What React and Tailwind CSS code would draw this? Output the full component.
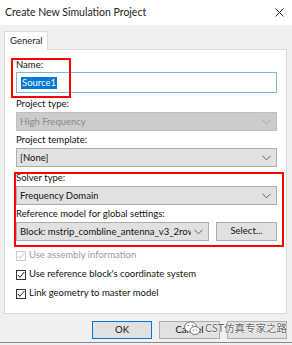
import React from "react";

const font = { fontFamily: 'Lato, "Noto Sans", "Noto Sans CJK SC", sans-serif' };

function Chevron({ color = "#606060" }) {
  return (
    <svg width="9" height="6" viewBox="0 0 9 6" className="shrink-0">
      <path d="M0.5 0.8 L4.5 4.8 L8.5 0.8" fill="none" stroke={color} strokeWidth="1" />
    </svg>
  );
}

function Combo({ value, disabled, className = "" }) {
  return (
    <div
      className={`h-[19px] flex items-center justify-between gap-[3px] pl-[3px] pr-[5px] border text-[9.5px] leading-[14px] ${
        disabled ? "bg-[#cccccc] border-[#bfbfbf] text-[#8a8a8a]" : "bg-[#e1e1e1] border-[#adadad] text-[#111]"
      } ${className}`}
    >
      <span className="whitespace-nowrap overflow-hidden">{value}</span>
      <Chevron color={disabled ? "#a0a0a0" : "#606060"} />
    </div>
  );
}

function Label({ children }) {
  return <div className="h-[15px] flex items-center text-[9.5px] text-[#111]">{children}</div>;
}

function Check({ label, disabled }) {
  return (
    <div className="h-[19px] flex items-center gap-[3px]">
      <div
        className={`w-[10px] h-[10px] border bg-white flex items-center justify-center ${
          disabled ? "border-[#cccccc]" : "border-[#333]"
        }`}
      >
        <svg width="8" height="8" viewBox="0 0 8 8">
          <path d="M0.8 4 L3 6.3 L7.3 1" fill="none" stroke={disabled ? "#c4c4c4" : "#222"} strokeWidth="1" />
        </svg>
      </div>
      <span className={`text-[9.5px] ${disabled ? "text-[#9a9a9a]" : "text-[#111]"}`}>{label}</span>
    </div>
  );
}

export default function App() {
  return (
    <div className="w-[292px] h-[345px] bg-[#f0f0f0] flex flex-col relative overflow-hidden" style={font}>
      {/* title bar */}
      <div className="h-[25px] bg-white flex items-center justify-between pl-[5px] pr-[8px]">
        <span className="text-[10.5px] text-[#222]">Create New Simulation Project</span>
        <svg width="9" height="9" viewBox="0 0 9 9">
          <path d="M0.5 0.5 L8.5 8.5 M8.5 0.5 L0.5 8.5" stroke="#222" strokeWidth="1" />
        </svg>
      </div>

      <div className="px-[4px] pt-[6px] pr-[5px]">
        {/* tab */}
        <div className="flex">
          <div className="w-[44px] h-[19px] bg-white border border-b-0 border-[#d9d9d9] flex items-center pl-[5px] text-[9.5px] text-[#222] -mb-px relative z-10">
            General
          </div>
        </div>

        {/* panel */}
        <div className="h-[265px] bg-white border border-[#d9d9d9] pt-[8px] pl-[11px] pr-[9px] relative">
          <Label>Name:</Label>
          <div className="h-[21px] border border-[#7eb4ea] flex items-center pl-[4px] mt-[-1px]">
            <span className="bg-[#0078d7] text-white text-[9.5px] leading-[12px] px-[1px]">Source1</span>
          </div>

          <div className="mt-[4px]">
            <Label>Project type:</Label>
            <Combo value="High Frequency" disabled />
          </div>
          <div className="mt-[2px]">
            <Label>Project template:</Label>
            <Combo value="[None]" />
          </div>
          <div className="mt-[4px]">
            <Label>Solver type:</Label>
            <Combo value="Frequency Domain" />
          </div>
          <div className="mt-[2px]">
            <Label>Reference model for global settings:</Label>
            <div className="flex gap-[7px]">
              <Combo value="Block: mstrip_combline_antenna_v3_2rows," className="flex-1 min-w-0" />
              <div className="w-[61px] h-[19px] bg-[#e1e1e1] border border-[#adadad] flex items-center justify-center text-[9.5px] text-[#111]">
                Select...
              </div>
            </div>
          </div>

          <div className="mt-[5px]">
            <Check label="Use assembly information" disabled />
            <Check label="Use reference block's coordinate system" />
            <Check label="Link geometry to master model" />
          </div>

          {/* red annotation boxes */}
          <div className="absolute left-[6px] top-[8px] w-[60px] h-[40px] border-2 border-[#ff0000]" />
          <div className="absolute left-[9px] top-[122px] w-[270px] h-[75px] border-2 border-[#ff0000]" />
        </div>

        {/* buttons */}
        <div className="flex justify-end gap-[7px] mt-[7px]">
          <div className="w-[60px] h-[18px] bg-[#e1e1e1] border border-[#0078d7] flex items-center justify-center text-[9.5px] text-[#111]">
            OK
          </div>
          <div className="w-[61px] h-[18px] bg-[#e1e1e1] border border-[#adadad] flex items-center justify-center text-[9.5px] text-[#111]">
            Cancel
          </div>
          <div className="w-[60px] h-[18px] bg-[#e1e1e1] border border-[#adadad]" />
        </div>
      </div>

      <div className="absolute left-0 right-0 bottom-[2px] h-px bg-[#888]" />

      {/* watermark */}
      <div className="absolute left-[184px] top-[321px] flex items-center gap-[4px]">
        <svg width="17" height="15" viewBox="0 0 17 15">
          <ellipse cx="6.5" cy="6" rx="6" ry="5" fill="#fff" stroke="#777" strokeWidth="1" />
          <ellipse cx="11" cy="9.5" rx="5" ry="4" fill="#fff" stroke="#777" strokeWidth="1" />
          <circle cx="4.5" cy="4.5" r="0.8" fill="#777" />
          <circle cx="8.5" cy="4.5" r="0.8" fill="#777" />
          <circle cx="9.5" cy="9" r="0.7" fill="#777" />
          <circle cx="12.5" cy="9" r="0.7" fill="#777" />
        </svg>
        <span
          className="text-[10.5px] text-[#666]"
          style={{ textShadow: "0 0 2px #fff, 0 0 2px #fff, 0 0 1px #fff" }}
        >
          CST仿真专家之路
        </span>
      </div>
    </div>
  );
}
